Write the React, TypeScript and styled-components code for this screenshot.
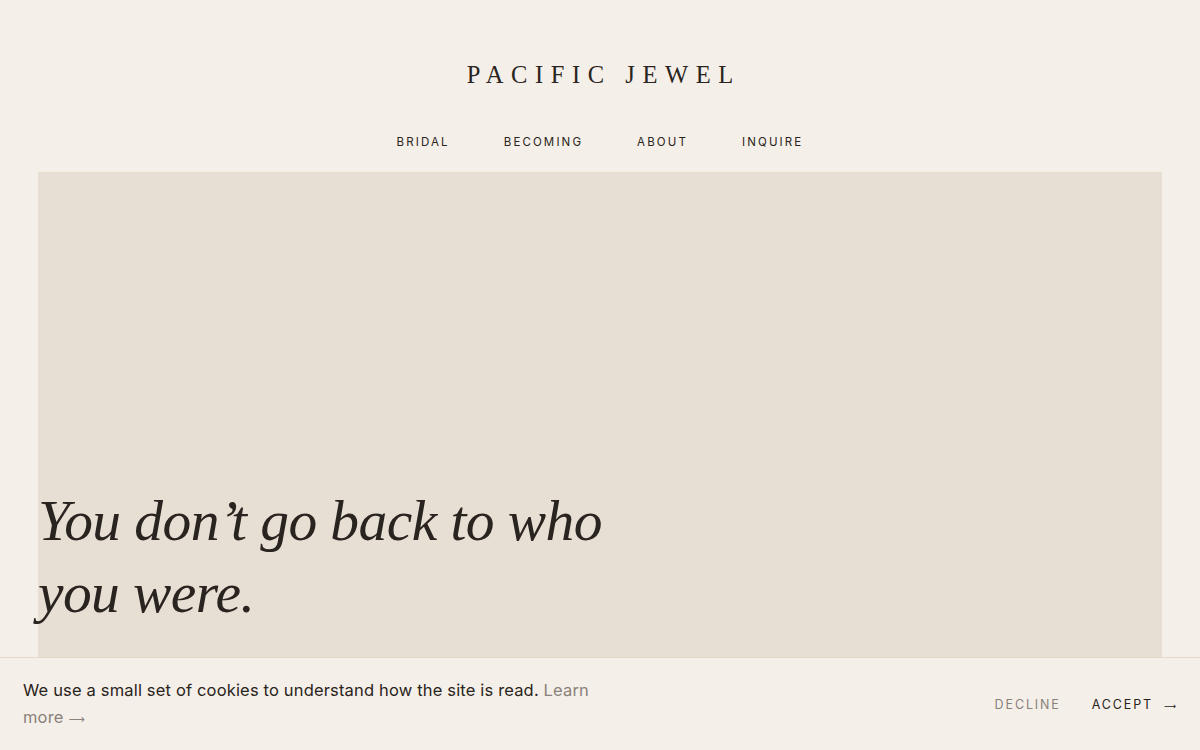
import React from "react";
import styled, { createGlobalStyle } from "styled-components";

const GlobalStyle = createGlobalStyle`
    html, body {
        margin: 0;
        padding: 0;
        background: #f4efe8;
        color: #2a2420;
        font-family: Inter, "Liberation Sans", sans-serif;
    }
    * {
        box-sizing: border-box;
    }
`;

const Page = styled.div`
    display: flex;
    flex-direction: column;
    padding: 0 38px;
`;

const Header = styled.header`
    display: flex;
    flex-direction: column;
    align-items: center;
    padding-top: 60px;
`;

const Logo = styled.a`
    font-family: "Liberation Serif", "DejaVu Serif", serif;
    font-size: 24.5px;
    font-weight: 400;
    letter-spacing: 0.31em;
    margin-right: -0.31em;
    color: #2a2420;
    text-decoration: none;
    line-height: 1.2;
`;

const Nav = styled.nav`
    display: flex;
    gap: 54px;
    margin-top: 45px;
    height: 38px;
    align-items: flex-start;
`;

const NavLink = styled.a`
    font-size: 11.5px;
    font-weight: 400;
    letter-spacing: 0.185em;
    color: #2a2420;
    text-decoration: none;
    line-height: 16px;
`;

const Hero = styled.section`
    background: #e7dfd3;
    border-top: 1px solid #eadbc9;
    height: 578px;
    padding-top: 312px;
`;

const Headline = styled.h1`
    margin: 0;
    max-width: 600px;
    font-family: "Liberation Serif", "DejaVu Serif", serif;
    font-style: italic;
    font-weight: 400;
    font-size: 57.5px;
    line-height: 72px;
    color: #2a2420;
    letter-spacing: -0.01em;
`;

const CookieBar = styled.div`
    position: fixed;
    left: 0;
    right: 0;
    bottom: 0;
    height: 93px;
    background: #f4efe8;
    border-top: 1px solid #e6d8c8;
    display: flex;
    align-items: center;
    justify-content: space-between;
    padding: 0 24px 0 23px;
`;

const CookieText = styled.p`
    margin: 0;
    max-width: 580px;
    font-size: 16.5px;
    letter-spacing: 0.01em;
    line-height: 27px;
    color: #2a2420;
`;

const LearnMore = styled.a`
    color: #8a817a;
    text-decoration: none;
`;

const Arrow = styled.span`
    font-family: "DejaVu Sans", sans-serif;
    font-size: 0.68em;
    line-height: 1;
    letter-spacing: 0;
`;

const Actions = styled.div`
    display: flex;
    align-items: center;
    gap: 31px;
`;

const ActionButton = styled.button<{ $muted?: boolean }>`
    background: none;
    border: 0;
    padding: 0;
    cursor: pointer;
    font-family: Inter, "Liberation Sans", sans-serif;
    font-size: 12.5px;
    letter-spacing: 0.15em;
    color: ${(p) => (p.$muted ? "#8a817a" : "#2a2420")};
`;

const links = ["BRIDAL", "BECOMING", "ABOUT", "INQUIRE"];

export default function App() {
    return (
        <>
            <GlobalStyle />
            <Page>
                <Header>
                    <Logo href="#">PACIFIC JEWEL</Logo>
                    <Nav>
                        {links.map((l) => (
                            <NavLink key={l} href="#">
                                {l}
                            </NavLink>
                        ))}
                    </Nav>
                </Header>
                <Hero>
                    <Headline>You don’t go back to who you were.</Headline>
                </Hero>
            </Page>
            <CookieBar>
                <CookieText>
                    We use a small set of cookies to understand how the site is
                    read.{" "}
                    <LearnMore href="#">
                        Learn more <Arrow>⟶</Arrow>
                    </LearnMore>
                </CookieText>
                <Actions>
                    <ActionButton $muted>DECLINE</ActionButton>
                    <ActionButton>
                        ACCEPT &nbsp;<Arrow>⟶</Arrow>
                    </ActionButton>
                </Actions>
            </CookieBar>
        </>
    );
}
